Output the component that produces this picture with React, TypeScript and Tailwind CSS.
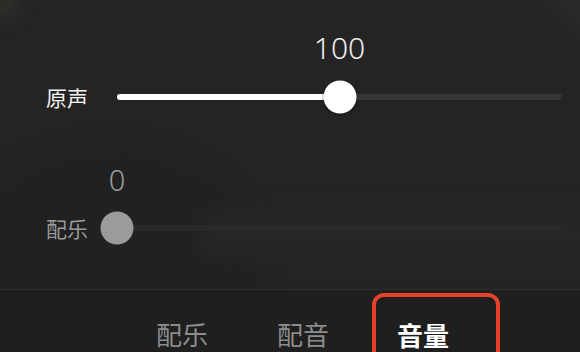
import React from 'react';

const cjk = { fontFamily: '"Noto Sans CJK SC", "Noto Sans", sans-serif' };
const num = { fontFamily: '"Noto Sans", "Open Sans", sans-serif' };

interface SliderRowProps {
  label: string;
  value: number;
  max: number;
  active: boolean;
}

function SliderRow({ label, value, max, active }: SliderRowProps) {
  const pct = (value / max) * 100;
  return (
    <div className="flex items-center pl-[46px] pr-[18px] h-[34px]">
      <div
        className={`w-[71px] text-[21px] leading-none ${active ? 'text-[#f2f2f2]' : 'text-[#9a9a9a]'}`}
        style={cjk}
      >
        {label}
      </div>
      <div className={`relative flex-1 h-[6px] rounded-full ${active ? 'bg-[#363636]' : 'bg-[#292929]'}`}>
        {active && (
          <div className="absolute left-0 top-0 h-full rounded-full bg-white" style={{ width: `${pct}%` }} />
        )}
        <div
          className={`absolute top-1/2 w-[33px] h-[33px] -translate-x-1/2 -translate-y-1/2 rounded-full ${
            active ? 'bg-white shadow-[0_1px_3px_rgba(0,0,0,0.5)]' : 'bg-[#9b9b9b]'
          }`}
          style={{ left: `${pct}%` }}
        />
        <div
          className={`absolute -translate-x-1/2 font-light leading-none ${
            active ? 'bottom-[37px] text-[30px] text-[#ececec]' : 'bottom-[37px] text-[29px] text-[#9a9a9a]'
          }`}
          style={{ left: `${pct}%`, ...num }}
        >
          {value}
        </div>
      </div>
    </div>
  );
}

export default function App() {
  return (
    <div className="w-[580px] h-[352px] overflow-hidden bg-[#1f1f1f] flex flex-col">
      <div className="relative shrink-0 h-[290px] bg-[#242424] overflow-hidden border-b border-[#2e2e2e]">
        <div className="absolute -left-[40px] top-[150px] w-[300px] h-[240px] rounded-[50%] bg-[#212121] blur-[12px]" />
        <div className="absolute left-[200px] top-[210px] w-[420px] h-[50px] bg-[#262626] blur-[10px]" />
        <div className="absolute -left-[20px] -top-[20px] w-[40px] h-[40px] rounded-full bg-[#2b2e29] blur-[8px]" />
        <div className="absolute -right-[40px] -top-[40px] w-[70px] h-[70px] rotate-45 bg-[#282828] blur-[4px]" />
        <div className="relative flex flex-col pt-[80px]">
          <SliderRow label="原声" value={100} max={200} active />
          <div className="h-[97px]" />
          <SliderRow label="配乐" value={0} max={200} active={false} />
        </div>
      </div>
      <div className="flex items-start pl-[156px] pt-[3px]" style={cjk}>
        <div className="mt-[28px] text-[26px] leading-none text-[#8c8c8c]">配乐</div>
        <div className="ml-[69px] mt-[28px] text-[26px] leading-none text-[#8c8c8c]">配音</div>
        <div className="ml-[43px] w-[128px] h-[72px] shrink-0 rounded-[12px] border-[4px] border-[#e5412b] pl-[21px] pt-[25px]">
          <div className="text-[26px] leading-none font-bold text-white">音量</div>
        </div>
      </div>
    </div>
  );
}
